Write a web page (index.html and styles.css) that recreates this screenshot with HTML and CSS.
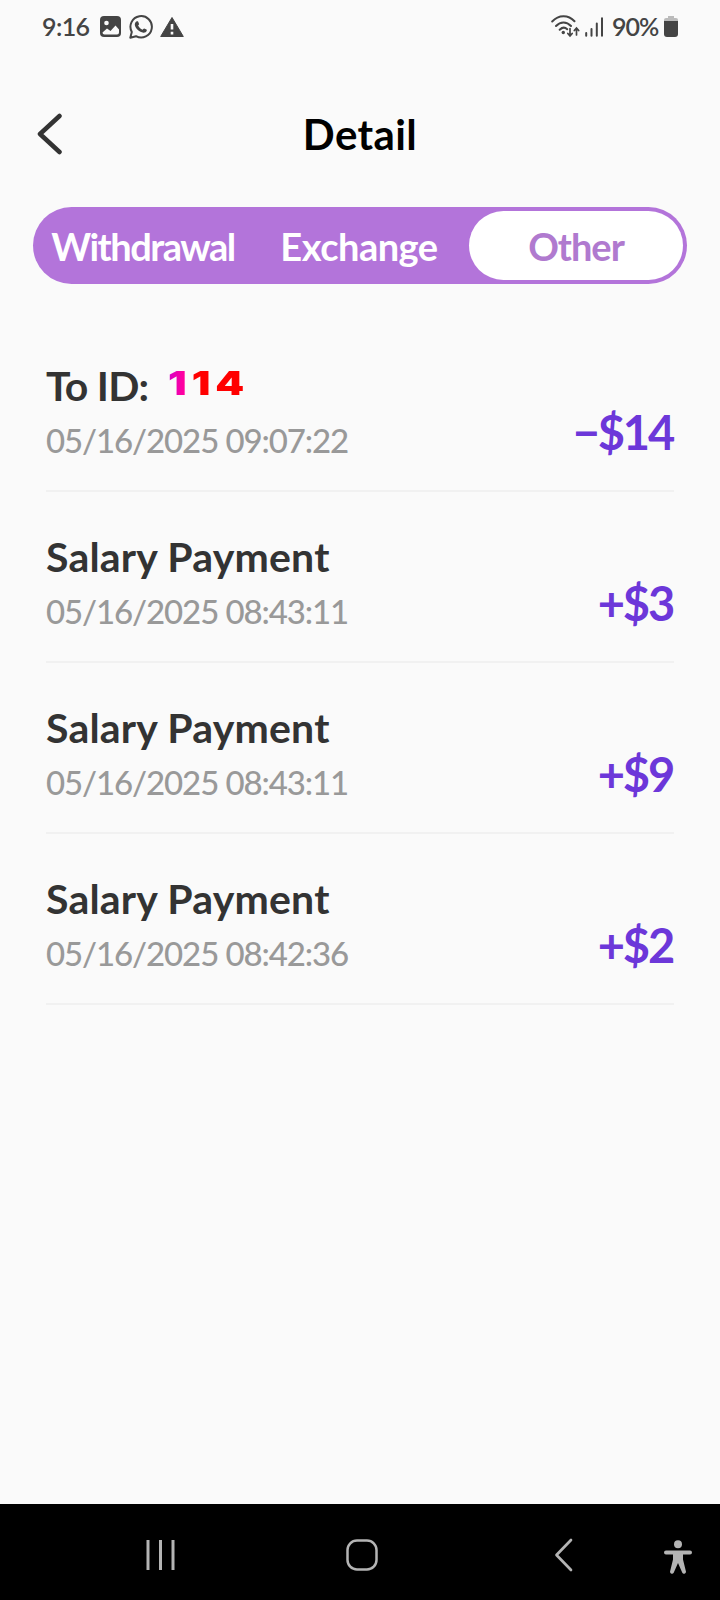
FILE: index.html
```html
<!DOCTYPE html>
<html lang="en">

<head>
    <meta charset="UTF-8">
    <meta name="viewport" content="width=device-width, initial-scale=1.0">
    <title>Detail</title>
    <link rel="stylesheet" href="styles.css">
</head>

<body>
    <div class="status">
        <span class="time">9:16</span>
        <svg class="s-img" width="21" height="21" viewBox="0 0 21 21">
            <rect width="21" height="21" rx="4" fill="#444" />
            <circle cx="6.5" cy="7" r="2.3" fill="#fafafa" />
            <path d="M2.5 16.5l4.5-4 3.5 2.5 5-5.5 3.5 4v3a2 2 0 0 1-2 2h-12.500a2 2 0 0 1-2-2z" fill="#fafafa" />
        </svg>
        <svg class="s-wa" width="24" height="24" viewBox="0 0 24 24">
            <path d="M1.300 22.700l1.500-5.700a10.700 10.700 0 1 1 4.200 4.200z" fill="none" stroke="#444" stroke-width="2" stroke-linejoin="round" />
            <path d="M8.300 6.200c.5 0 .7.1.9.6l.9 2.100c.1.400-.8 1.300-1 1.700.9 1.900 2.400 3.300 4.400 4.200.5-.3 1.200-1.500 1.700-1.300l2.300 1.100c.4.200.4.500.3 1-.4 1.700-2 2.300-3.300 2.200-4.200-.6-7.800-3.900-8.700-7.700-.2-1.700.9-3.900 2.500-3.900z" fill="#444" />
        </svg>
        <svg class="s-warn" width="24" height="20" viewBox="0 0 24 20">
            <path d="M12 .5L23.300 19.500H.7z" fill="#444" stroke="#444" stroke-linejoin="round" />
            <path d="M12 7v5.500M12 14.800v2.600" stroke="#fafafa" stroke-width="2.600" />
        </svg>
        <svg class="s-wifi" width="29" height="23" viewBox="0 0 29 23">
            <g fill="none" stroke="#444" stroke-width="2" stroke-linecap="round">
                <path d="M1.200 6.500c6.500-7 16-7 22.300-.3M5 11c4.500-4.800 10.500-4.800 15 0M8.700 14.800c2.500-2.500 5.500-2.500 7.500-.5" />
                <path d="M19 13.500v7M16.800 18.500l2.200 2.400 2.200-2.400M25.500 20v-7M23.300 15.500l2.200-2.400 2.200 2.400" stroke-width="1.700" />
            </g>
            <circle cx="12.300" cy="17.500" r="1.700" fill="#444" />
        </svg>
        <svg class="s-signal" width="18" height="20" viewBox="0 0 18 20">
            <path d="M1.200 16v2.800M6.500 12v6.800M11.800 6.500v12.300M17 1.200v17.600" stroke="#444" stroke-width="2" stroke-linecap="round" />
        </svg>
        <span class="percent">90%</span>
        <svg class="s-bat" width="14" height="21" viewBox="0 0 14 21">
            <path d="M0 6V4q0-2 2-2h2V0h6v2h2q2 0 2 2v2z" fill="#bbb" />
            <path d="M0 5h14v13q0 3-3 3H3q-3 0-3-3z" fill="#444" />
        </svg>
    </div>

    <div class="header">
        <a href="#" class="back">
            <svg width="26" height="42" viewBox="0 0 26 42">
                <path d="M22.500 3L3 21l19.500 18" fill="none" stroke="#333" stroke-width="4.500" stroke-linecap="round" stroke-linejoin="round" />
            </svg>
        </a>
        <h1>Detail</h1>
    </div>

    <ul class="tabs">
        <li class="withdrawal">Withdrawal</li>
        <li class="exchange">Exchange</li>
        <li class="other active">Other</li>
    </ul>

    <ul class="list">
        <li>
            <div class="info">
                <h2><span class="to">To ID:</span><span class="uid">114</span></h2>
                <p>05/16/2025 09:07:22</p>
            </div>
            <span class="money">−$14</span>
        </li>
        <li>
            <div class="info">
                <h2>Salary Payment</h2>
                <p>05/16/2025 08:43:11</p>
            </div>
            <span class="money">+$3</span>
        </li>
        <li>
            <div class="info">
                <h2>Salary Payment</h2>
                <p>05/16/2025 08:43:11</p>
            </div>
            <span class="money">+$9</span>
        </li>
        <li>
            <div class="info">
                <h2>Salary Payment</h2>
                <p>05/16/2025 08:42:36</p>
            </div>
            <span class="money">+$2</span>
        </li>
    </ul>

    <div class="navbar">
        <svg class="n-recent" width="30" height="32" viewBox="0 0 30 32">
            <path d="M2 1v30M14.500 1v30M27 1v30" stroke="#b4b4b4" stroke-width="3" />
        </svg>
        <svg class="n-home" width="32" height="32" viewBox="0 0 32 32">
            <rect x="1.500" y="1.500" width="29" height="29" rx="9.500" fill="none" stroke="#b4b4b4" stroke-width="2.500" />
        </svg>
        <svg class="n-back" width="20" height="34" viewBox="0 0 20 34">
            <path d="M17 2L2.500 17 17 32" fill="none" stroke="#b4b4b4" stroke-width="2.700" stroke-linecap="round" stroke-linejoin="round" />
        </svg>
        <svg class="n-access" width="28" height="34" viewBox="0 0 28 34">
            <circle cx="14" cy="4.200" r="4" fill="#b4b4b4" />
            <path d="M2 10.500h24a2 2 0 0 1 0 4h-7v5l3 12.300a2 2 0 0 1-3.700 1L14 23l-4.300 9.800a2 2 0 0 1-3.700-1l3-12.300v-5H2a2 2 0 0 1 0-4z" fill="#b4b4b4" />
        </svg>
    </div>
</body>

</html>
```
FILE: styles.css
```css
* {
    padding: 0;
    margin: 0;
    box-sizing: border-box;
    list-style: none;
}

body {
    display: flex;
    flex-direction: column;
    width: 720px;
    height: 1600px;
    background: #fafafa;
    color: #333;
    font-family: Lato, "Open Sans", sans-serif;
    white-space: nowrap;
    overflow: hidden;
}

svg {
    display: block;
    flex: none;
}

/* status bar */
.status {
    display: flex;
    align-items: center;
    height: 53px;
    padding: 0 42px 0 42px;
    color: #444;
    font-size: 25px;
    font-weight: 600;
    line-height: 53px;
}

.time {
    width: 58px;
    letter-spacing: -.6px;
}

.s-wa {
    margin-left: 8px;
}

.s-warn {
    margin-left: 7px;
}

.s-wifi {
    margin-left: auto;
}

.s-signal {
    margin: 0 9px 0 5px;
}

.percent {
    width: 52px;
    letter-spacing: -1px;
}

/* header */
.header {
    display: grid;
    grid-template-columns: 60px 1fr 60px;
    align-items: center;
    height: 154px;
    padding: 8px 36px 0;
}

.header .back {
    padding: 0 0 1px 1px;
}

.header h1 {
    color: #000;
    font-size: 42px;
    font-weight: 700;
    line-height: 54px;
    letter-spacing: .4px;
    text-align: center;
}

/* tabs */
.tabs {
    display: flex;
    width: 654px;
    height: 77px;
    margin-left: 33px;
    padding: 4px;
    border-radius: 39px;
    background: #b374da;
    color: #fff;
    font-size: 38px;
    font-weight: 700;
    line-height: 70px;
    text-align: center;
}

.tabs li {
    width: 216px;
}

.tabs .withdrawal {
    padding-right: 4px;
    letter-spacing: -1.5px;
}

.tabs .exchange {
    width: 212px;
    letter-spacing: -.5px;
}

.tabs .active {
    flex: none;
    width: 214px;
    margin-left: auto;
    border-radius: 35px;
    background: #fff;
    color: #b07acf;
    letter-spacing: -1px;
}

/* list */
.list {
    flex: 1;
    margin: 37px 46px 0;
}

.list li {
    display: flex;
    justify-content: space-between;
    height: 171px;
    border-bottom: 2px solid #f1f1f1;
}

.info {
    padding-top: 40px;
}

.info h2 {
    display: flex;
    height: 54px;
    font-size: 41px;
    font-weight: 700;
    line-height: 50px;
    letter-spacing: .2px;
}

.to {
    width: 103px;
    letter-spacing: -.8px;
}

.uid {
    margin-left: 19px;
    background: linear-gradient(90deg, #d400c8 0, #ff00a0 18%, #ff00a0 30%, #f00 31%);
    -webkit-background-clip: text;
    background-clip: text;
    color: transparent;
    font-family: Inter, sans-serif;
    font-size: 33px;
    font-weight: 900;
    line-height: 44px;
    letter-spacing: 4px;
    transform: scaleX(1.25);
    transform-origin: left;
}

.info p {
    color: #999;
    font-size: 33px;
    font-weight: 500;
    line-height: 50px;
    letter-spacing: -1.1px;
}

.money {
    margin-right: 1px;
    padding-top: 83px;
    color: #6c37d9;
    font-size: 47px;
    font-weight: 700;
    line-height: 56px;
    letter-spacing: -2.2px;
}

/* navigation bar */
.navbar {
    display: flex;
    align-items: center;
    height: 96px;
    padding: 6px 28px 0 146px;
    background: #000;
}

.n-home {
    margin-left: 170px;
}

.n-back {
    margin-left: 176px;
}

.n-access {
    margin: 4px 0 0 auto;
}
```
